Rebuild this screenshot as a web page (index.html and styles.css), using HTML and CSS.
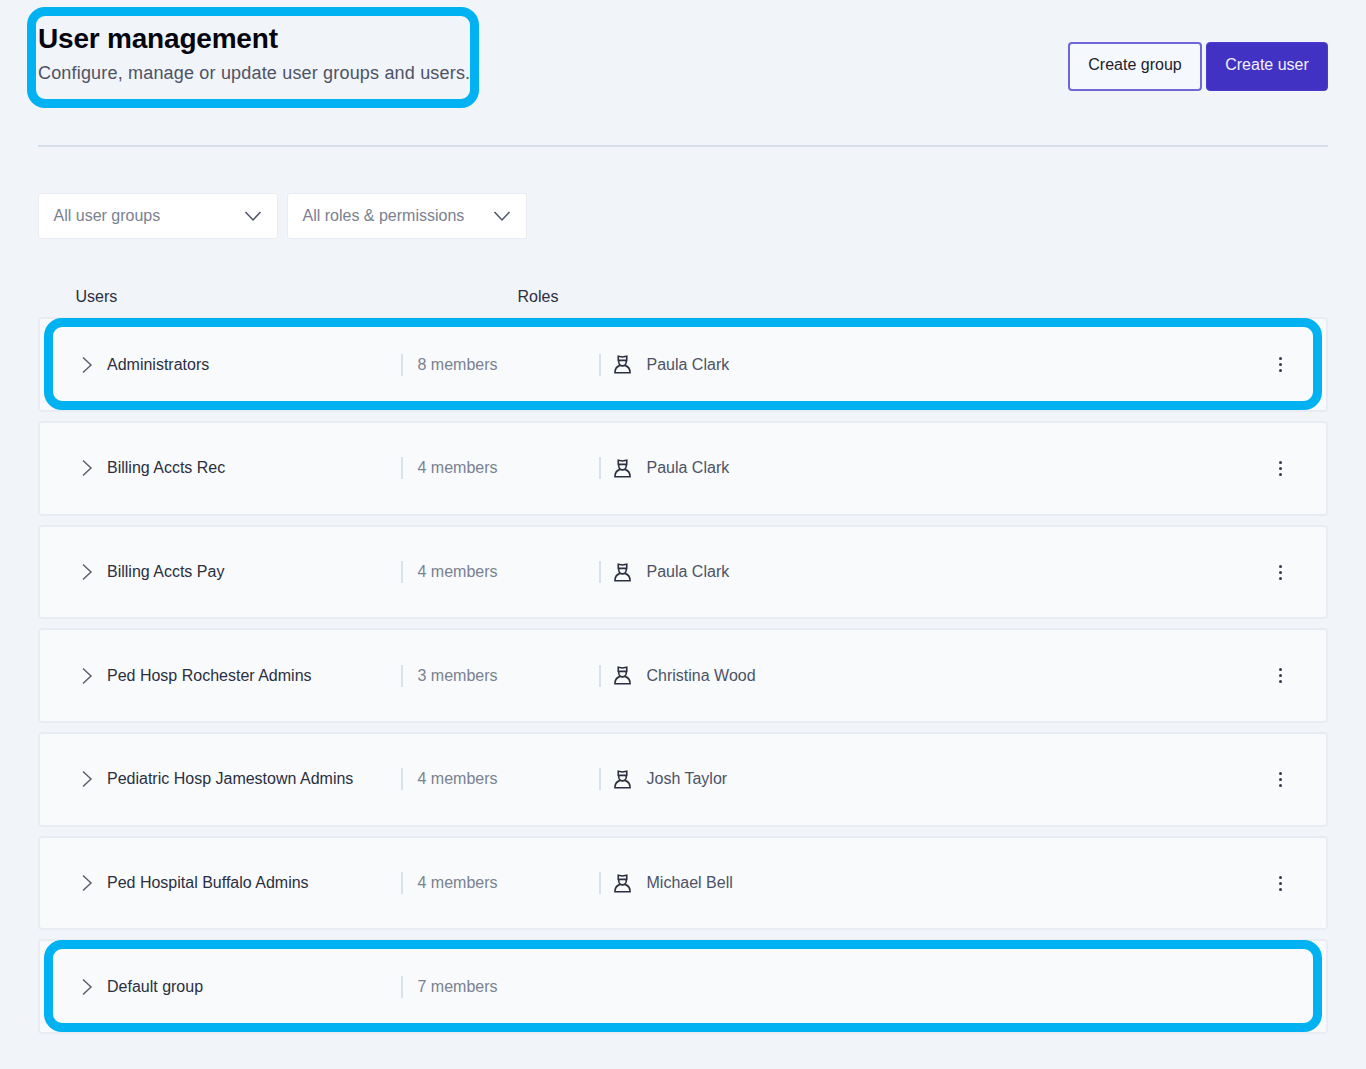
FILE: index.html
```html
<!DOCTYPE html>
<html lang="en">
<head>
<meta charset="UTF-8">
<meta name="viewport" content="width=device-width, initial-scale=1.0">
<title>User management</title>
<link rel="stylesheet" href="styles.css">
</head>
<body>
<svg class="icon-defs" width="0" height="0">
  <symbol id="chev-right" viewBox="0 0 12 18"><path d="M2 1.5 L10 9 L2 16.5" fill="none" stroke="currentColor" stroke-width="1.5"/></symbol>
  <symbol id="chev-down" viewBox="0 0 18 12"><path d="M1.5 2 L9 10 L16.5 2" fill="none" stroke="currentColor" stroke-width="1.5"/></symbol>
  <symbol id="person" viewBox="0 0 18 20">
    <path d="M4.5 1.2 L9 2 L13.5 1.2 V5.6 H4.5 Z M5 5.6 C4.6 10.6 7 11.4 9 11.4 C11 11.4 13.4 10.6 13 5.6 M6 11.2 C2.8 12.2 1 14.8 1 18.8 H17 C17 14.8 15.2 12.2 12 11.2" fill="none" stroke="currentColor" stroke-width="1.7"/>
  </symbol>
</svg>
<div class="page">
  <header class="top">
    <div class="title-block">
      <h1>User management</h1>
      <p>Configure, manage or update user groups and users.</p>
      <span class="callout callout-title"></span>
    </div>
    <div class="actions">
      <button class="btn btn-outline" type="button">Create group</button>
      <button class="btn btn-solid" type="button">Create user</button>
    </div>
  </header>

  <div class="filters">
    <div class="select"><span>All user groups</span><svg class="select-arrow"><use href="#chev-down"/></svg></div>
    <div class="select"><span>All roles &amp; permissions</span><svg class="select-arrow"><use href="#chev-down"/></svg></div>
  </div>

  <div class="col-heads">
    <span class="col-users">Users</span>
    <span>Roles</span>
  </div>

  <div class="rows">
    <div class="row">
      <svg class="chev"><use href="#chev-right"/></svg>
      <span class="name">Administrators</span>
      <span class="members">8 members</span>
      <span class="role"><svg class="person"><use href="#person"/></svg>Paula Clark</span>
      <span class="more"><i></i><i></i><i></i></span>
      <span class="callout callout-row"></span>
    </div>
    <div class="row">
      <svg class="chev"><use href="#chev-right"/></svg>
      <span class="name">Billing Accts Rec</span>
      <span class="members">4 members</span>
      <span class="role"><svg class="person"><use href="#person"/></svg>Paula Clark</span>
      <span class="more"><i></i><i></i><i></i></span>
    </div>
    <div class="row">
      <svg class="chev"><use href="#chev-right"/></svg>
      <span class="name">Billing Accts Pay</span>
      <span class="members">4 members</span>
      <span class="role"><svg class="person"><use href="#person"/></svg>Paula Clark</span>
      <span class="more"><i></i><i></i><i></i></span>
    </div>
    <div class="row">
      <svg class="chev"><use href="#chev-right"/></svg>
      <span class="name">Ped Hosp Rochester Admins</span>
      <span class="members">3 members</span>
      <span class="role"><svg class="person"><use href="#person"/></svg>Christina Wood</span>
      <span class="more"><i></i><i></i><i></i></span>
    </div>
    <div class="row">
      <svg class="chev"><use href="#chev-right"/></svg>
      <span class="name">Pediatric Hosp Jamestown Admins</span>
      <span class="members">4 members</span>
      <span class="role"><svg class="person"><use href="#person"/></svg>Josh Taylor</span>
      <span class="more"><i></i><i></i><i></i></span>
    </div>
    <div class="row">
      <svg class="chev"><use href="#chev-right"/></svg>
      <span class="name">Ped Hospital Buffalo Admins</span>
      <span class="members">4 members</span>
      <span class="role"><svg class="person"><use href="#person"/></svg>Michael Bell</span>
      <span class="more"><i></i><i></i><i></i></span>
    </div>
    <div class="row">
      <svg class="chev"><use href="#chev-right"/></svg>
      <span class="name">Default group</span>
      <span class="members">7 members</span>
      <span class="callout callout-row"></span>
    </div>
  </div>
</div>
</body>
</html>
```

FILE: styles.css
```css
* {
  box-sizing: border-box;
}

body {
  margin: 0;
  background-color: #f1f4f9;
  font-family: "Liberation Sans", Arial, sans-serif;
  color: #2c2f3f;
}

.icon-defs {
  position: absolute;
}

.page {
  width: 1290px;
  margin-left: 38px;
  height: 1069px;
  overflow: visible;
}

.top {
  display: flex;
  justify-content: space-between;
  height: 147px;
  border-bottom: 2px solid #d5dfe9;
}

.title-block {
  position: relative;
  height: 100px;
  padding-top: 22px;
}

h1 {
  margin: 0;
  font-size: 28px;
  line-height: 34px;
  font-weight: 700;
  letter-spacing: -0.2px;
  color: #05050f;
}

.title-block p {
  margin: 2px 0 0;
  font-size: 18px;
  line-height: 30px;
  letter-spacing: 0.18px;
  color: #4d5366;
}

.callout {
  position: absolute;
  border: 9px solid #00b2f2;
  border-radius: 18px;
  pointer-events: none;
}

.callout-title {
  left: -11px;
  top: 7px;
  width: 452px;
  height: 101px;
}

.callout-row {
  left: 4px;
  top: -1.4px;
  width: 1278px;
  height: 92px;
}

.actions {
  display: flex;
  gap: 4px;
  padding-top: 42px;
}

.btn {
  height: 49px;
  border-radius: 4px;
  font-family: "Liberation Sans", Arial, sans-serif;
  font-size: 16px;
  padding: 0 0 4px;
}

.btn-outline {
  width: 134px;
  background-color: #f5f8fc;
  border: 2px solid #6f67d8;
  color: #20222e;
}

.btn-solid {
  width: 122px;
  background-color: #4232c4;
  border: 1px solid #4a3bd0;
  color: #f2f1ff;
}

.filters {
  display: flex;
  gap: 9px;
  margin-top: 46px;
}

.select {
  display: flex;
  align-items: center;
  justify-content: space-between;
  width: 240px;
  height: 46px;
  padding: 0 15px 0 14.5px;
  background-color: #fff;
  border: 1px solid #e9edf3;
  border-radius: 3px;
  font-size: 16px;
  color: #7a8191;
}

.select-arrow {
  width: 18px;
  height: 12px;
  color: #4d5366;
}

.col-heads {
  display: flex;
  margin-top: 46px;
  padding-left: 37.5px;
  font-size: 16px;
  line-height: 24px;
  color: #2c2f3f;
}

.col-users {
  width: 442px;
}

.rows {
  display: flex;
  flex-direction: column;
  gap: 9px;
  margin-top: 8.4px;
}

.row {
  position: relative;
  display: flex;
  align-items: center;
  height: 94.67px;
  padding-left: 41px;
  background-color: #f8fafc;
  border: 2px solid #e9edf3;
  border-radius: 4px;
  font-size: 16px;
}

.chev {
  width: 12px;
  height: 18px;
  color: #5c6070;
  flex-shrink: 0;
}

.name {
  width: 296px;
  margin-left: 14px;
  margin-right: -2px;
  color: #2c2f3f;
}

.members {
  width: 198px;
  line-height: 22px;
  padding-left: 14.5px;
  border-left: 2px solid #d9e1ec;
  color: #7a8191;
}

.role {
  display: flex;
  align-items: center;
  gap: 15.5px;
  line-height: 22px;
  padding-left: 13px;
  border-left: 2px solid #d9e1ec;
  color: #4d5366;
}

.person {
  width: 17px;
  height: 19px;
  color: #2c2f3f;
}

.more {
  display: flex;
  flex-direction: column;
  gap: 3px;
  margin-left: auto;
  margin-right: 44px;
}

.more i {
  display: block;
  width: 3px;
  height: 3px;
  border-radius: 50%;
  background-color: #33374a;
}
```
